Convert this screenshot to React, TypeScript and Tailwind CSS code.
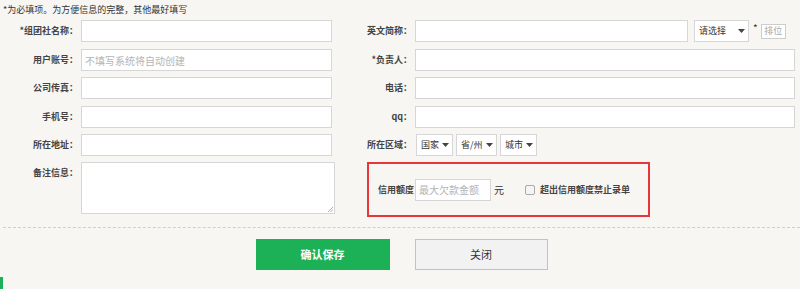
import React from "react";

const font = { fontFamily: '"Noto Sans CJK SC", "Noto Sans", sans-serif' };

function Label({ children }: { children: React.ReactNode }) {
  return <span className="w-[78px] shrink-0 text-right text-[9px] font-semibold leading-[22px] text-[#444]">{children}</span>;
}

function RLabel({ children }: { children: React.ReactNode }) {
  return <span className="w-[74px] shrink-0 text-right text-[9px] font-semibold leading-[22px] text-[#444]">{children}</span>;
}

function Field({ width, placeholder }: { width: string; placeholder?: string }) {
  return (
    <div className={`ml-[3px] flex h-[22px] items-center border border-[#d6d6d6] bg-white pl-[3px] text-[10px] text-[#b4b4b4] ${width}`}>
      {placeholder}
    </div>
  );
}

function Caret() {
  return (
    <svg width="7" height="4" viewBox="0 0 7 4" className="shrink-0">
      <path d="M0 0h7L3.5 4z" fill="#444" />
    </svg>
  );
}

function Drop({ text, width }: { text: string; width: string }) {
  return (
    <div className={`flex h-[22px] items-center justify-between border border-[#d6d6d6] bg-white pl-[4px] pr-[3px] text-[9px] text-[#333] ${width}`}>
      <span>{text}</span>
      <Caret />
    </div>
  );
}

export default function App() {
  return (
    <div style={font} className="relative h-[289px] w-[800px] overflow-hidden bg-[#f7f6f2]">
      <p className="pl-[3px] pt-[4px] text-[9px] leading-[12px] text-[#333]">*为必填项。为方便信息的完整，其他最好填写</p>

      <div className="mt-[4px] flex flex-col">
        <div className="flex h-[22px]">
          <div className="flex w-[338px]">
            <Label>*组团社名称：</Label>
            <Field width="w-[251px]" />
          </div>
          <div className="flex items-center">
            <RLabel>英文简称：</RLabel>
            <Field width="w-[273px]" />
            <div className="ml-[6px]">
              <Drop text="请选择" width="w-[55px]" />
            </div>
            <span className="ml-[4px] self-start pt-[3px] text-[10px] leading-[10px] text-[#333]">*</span>
            <span className="ml-[3px] flex h-[15px] w-[25px] items-center justify-center border border-[#ccc] bg-white text-[9px] text-[#aaa]">排位</span>
          </div>
        </div>

        <div className="mt-[7px] flex h-[22px]">
          <div className="flex w-[338px]">
            <Label>用户账号：</Label>
            <Field width="w-[251px]" placeholder="不填写系统将自动创建" />
          </div>
          <div className="flex">
            <RLabel>*负责人：</RLabel>
            <Field width="w-[380px]" />
          </div>
        </div>

        <div className="mt-[6px] flex h-[22px]">
          <div className="flex w-[338px]">
            <Label>公司传真：</Label>
            <Field width="w-[251px]" />
          </div>
          <div className="flex">
            <RLabel>电话：</RLabel>
            <Field width="w-[380px]" />
          </div>
        </div>

        <div className="mt-[7px] flex h-[22px]">
          <div className="flex w-[338px]">
            <Label>手机号：</Label>
            <Field width="w-[251px]" />
          </div>
          <div className="flex">
            <RLabel>qq：</RLabel>
            <Field width="w-[380px]" />
          </div>
        </div>

        <div className="mt-[6px] flex h-[22px]">
          <div className="flex w-[338px]">
            <Label>所在地址：</Label>
            <Field width="w-[251px]" />
          </div>
          <div className="flex">
            <RLabel>所在区域：</RLabel>
            <div className="ml-[4px] flex gap-[3px]">
              <Drop text="国家" width="w-[37px]" />
              <Drop text="省/州" width="w-[41px]" />
              <Drop text="城市" width="w-[37px]" />
            </div>
          </div>
        </div>

        <div className="mt-[6px] flex">
          <div className="flex w-[338px] items-start">
            <Label>备注信息：</Label>
            <div className="relative ml-[3px] h-[52px] w-[254px] border border-[#d6d6d6] bg-white">
              <svg width="6" height="6" viewBox="0 0 6 6" className="absolute bottom-[1px] right-[1px]">
                <path d="M1 6L6 1M3.5 6L6 3.5" stroke="#999" strokeWidth="0.8" />
              </svg>
            </div>
          </div>
          <div className="ml-[29px] flex h-[55px] w-[283px] items-center border-2 border-[#e8353a] pl-[9px]">
            <span className="text-[9px] font-semibold text-[#444]">信用额度</span>
            <div className="ml-[1px] flex h-[22px] w-[76px] items-center border border-[#d6d6d6] bg-white pl-[3px] text-[10px] text-[#b4b4b4]">最大欠款金额</div>
            <span className="ml-[3px] text-[10px] text-[#333]">元</span>
            <span className="ml-[21px] h-[10px] w-[10px] rounded-[2px] border border-[#aaa] bg-[#f4f4f4]" />
            <span className="ml-[5px] text-[9px] font-semibold text-[#444]">超出信用额度禁止录单</span>
          </div>
        </div>
      </div>

      <div className="ml-[3px] mt-[10px] border-t border-dashed border-[#cfcfcf]" />

      <div className="mt-[11px] flex justify-center gap-[25px] pl-[3px]">
        <button className="h-[31px] w-[134px] bg-[#1db157] text-[11px] font-bold text-white">确认保存</button>
        <button className="h-[31px] w-[133px] border border-[#c2c2c2] bg-[#f2f2f2] text-[11px] text-[#333]">关闭</button>
      </div>

      <div className="absolute bottom-0 left-0 h-[12px] w-[3px] bg-[#1db157]" />
    </div>
  );
}
